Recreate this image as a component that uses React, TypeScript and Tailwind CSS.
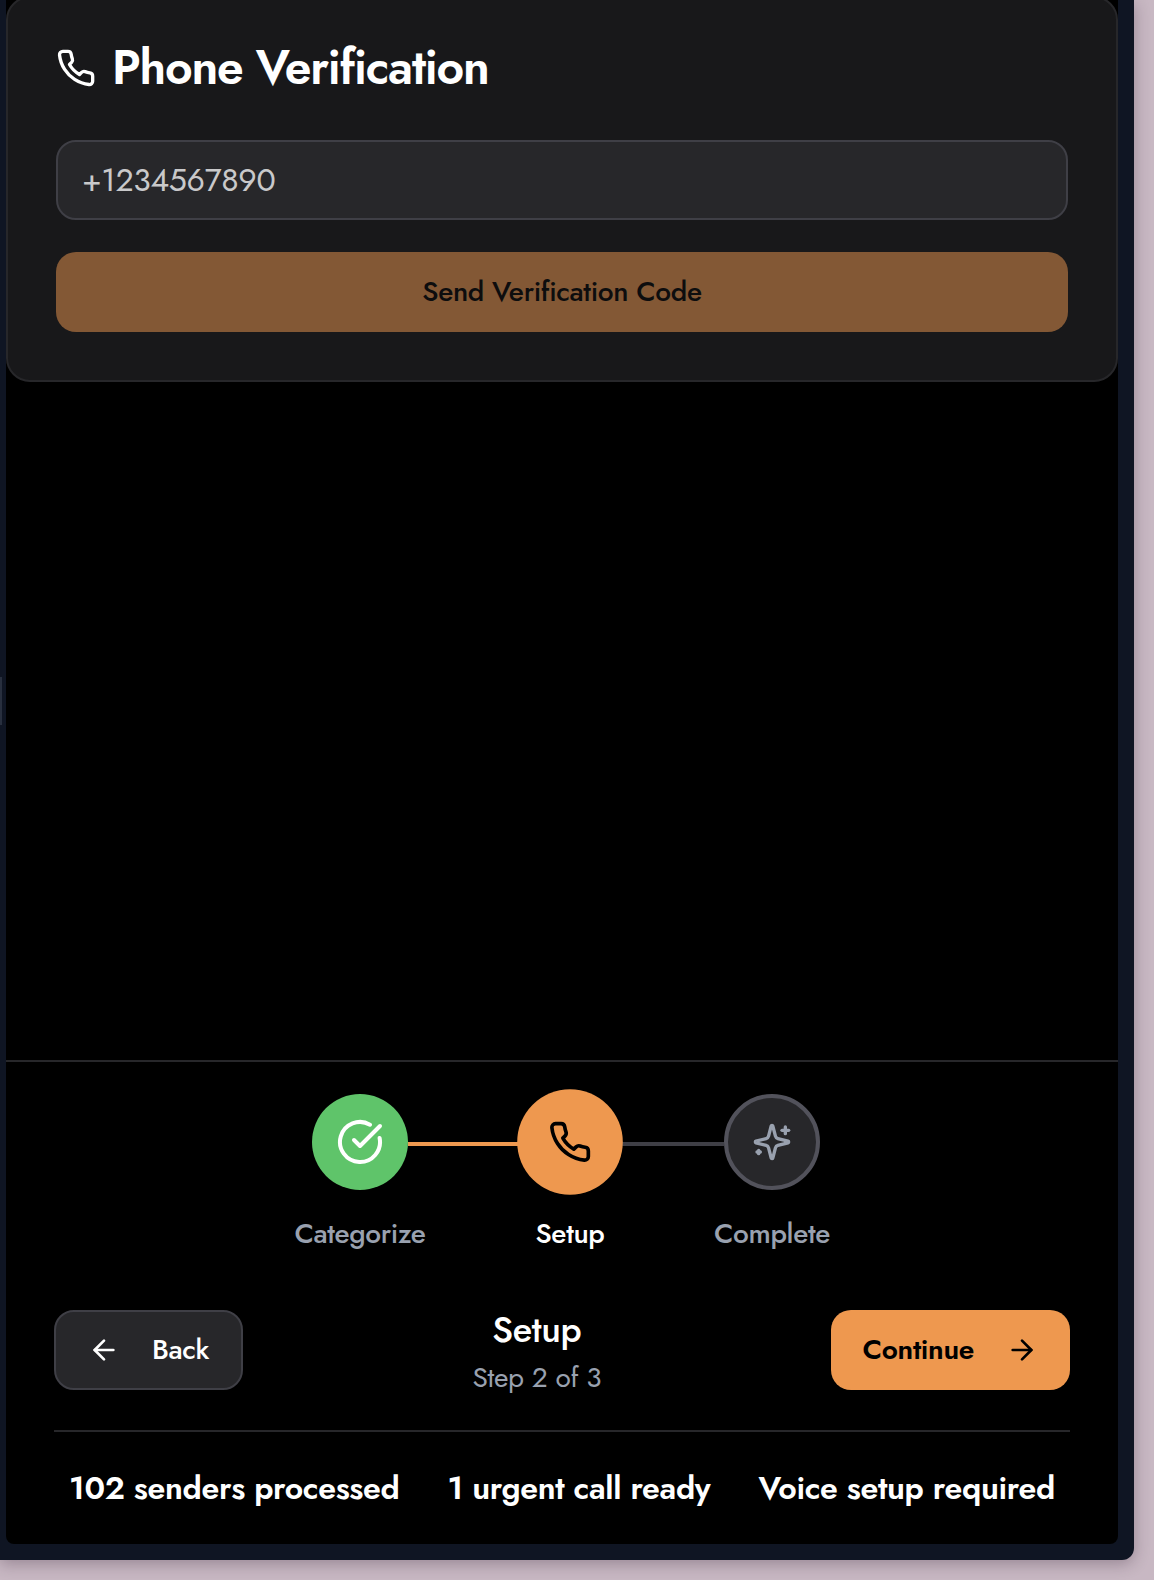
import type { ReactNode } from "react";

type IconProps = { className?: string; strokeWidth?: number; children?: ReactNode };

function Icon({ className, strokeWidth = 2, children }: IconProps) {
  return (
    <svg
      viewBox="0 0 24 24"
      fill="none"
      stroke="currentColor"
      strokeWidth={strokeWidth}
      strokeLinecap="round"
      strokeLinejoin="round"
      className={className}
    >
      {children}
    </svg>
  );
}

const PhoneIcon = ({ className }: IconProps) => (
  <Icon className={className}>
    <path d="M22 16.92v3a2 2 0 0 1-2.18 2 19.79 19.79 0 0 1-8.63-3.07 19.5 19.5 0 0 1-6-6 19.79 19.79 0 0 1-3.07-8.67A2 2 0 0 1 4.11 2h3a2 2 0 0 1 2 1.72 12.84 12.84 0 0 0 .7 2.81 2 2 0 0 1-.45 2.11L8.09 9.91a16 16 0 0 0 6 6l1.27-1.27a2 2 0 0 1 2.11-.45 12.84 12.84 0 0 0 2.81.7A2 2 0 0 1 22 16.92z" />
  </Icon>
);

const CheckIcon = ({ className }: IconProps) => (
  <Icon className={className}>
    <path d="M21.801 10A10 10 0 1 1 17 3.335" />
    <path d="m9 11 3 3L22 4" />
  </Icon>
);

const SparklesIcon = ({ className }: IconProps) => (
  <Icon className={className}>
    <path d="M9.937 15.5A2 2 0 0 0 8.5 14.063l-6.135-1.582a.5.5 0 0 1 0-.962L8.5 9.936A2 2 0 0 0 9.937 8.5l1.582-6.135a.5.5 0 0 1 .963 0L14.063 8.5A2 2 0 0 0 15.5 9.937l6.135 1.581a.5.5 0 0 1 0 .964L15.5 14.063a2 2 0 0 0-1.437 1.437l-1.582 6.135a.5.5 0 0 1-.963 0z" />
    <path d="M20 3v4" />
    <path d="M22 5h-4" />
    <path d="M4 17v2" />
    <path d="M5 18H3" />
  </Icon>
);

const ArrowLeft = ({ className }: IconProps) => (
  <Icon className={className}>
    <path d="m12 19-7-7 7-7" />
    <path d="M19 12H5" />
  </Icon>
);

const ArrowRight = ({ className }: IconProps) => (
  <Icon className={className}>
    <path d="M5 12h14" />
    <path d="m12 5 7 7-7 7" />
  </Icon>
);

function VerificationCard() {
  return (
    <section className="-mt-1 h-[386px] rounded-3xl border-2 border-[#27272a] bg-[#18181a] px-12 pt-[38px]">
      <div className="flex h-16 items-center gap-4">
        <PhoneIcon className="size-10" />
        <h1 className="text-[48px] leading-[64px] font-semibold tracking-tight whitespace-nowrap">Phone Verification</h1>
      </div>
      <div className="mt-10 flex h-20 items-center rounded-[20px] border-2 border-[#3f3f46] bg-[#27272a] px-6">
        <span className="text-[32px] text-[#c9c9ca]">+1234567890</span>
      </div>
      <button className="mt-8 flex h-20 w-full items-center justify-center rounded-[20px] bg-[#835835] text-[28px] font-medium text-[#0d0d0e]">
        Send Verification Code
      </button>
    </section>
  );
}

function Step({ label, labelClass, circleClass, children }: { label: string; labelClass: string; circleClass: string; children: ReactNode }) {
  return (
    <div className="z-10 flex w-24 flex-col items-center gap-6">
      <div className={`flex size-24 items-center justify-center rounded-full ${circleClass}`}>{children}</div>
      <span className={`text-[28px] leading-[39px] font-medium whitespace-nowrap ${labelClass}`}>{label}</span>
    </div>
  );
}

function Stepper() {
  return (
    <div className="flex h-40 justify-center pl-2">
      <Step label="Categorize" labelClass="text-[#99a1af]" circleClass="bg-[#5fc46a] text-white">
        <CheckIcon className="size-12" />
      </Step>
      <div className="mt-12 h-1 w-[114px] bg-[#ee984f]" />
      <Step label="Setup" labelClass="text-white" circleClass="scale-110 bg-[#ee984f] text-black">
        <PhoneIcon className="size-10" />
      </Step>
      <div className="mt-12 h-1 w-[106px] bg-[#3f3f46]" />
      <Step label="Complete" labelClass="text-[#99a1af]" circleClass="border-4 border-[#52525b] bg-[#27272a] text-[#99a1af]">
        <SparklesIcon className="size-10" />
      </Step>
    </div>
  );
}

export default function App() {
  return (
    <div className="relative h-[1580px] w-[1154px] overflow-hidden bg-[#c8b8c3] font-[Jost,Lato,sans-serif] tracking-[-0.32px] text-white">
      <div className="h-[1560px] w-[1134px] rounded-br-[12px] bg-[#0f1523] pr-4 pb-4 pl-1.5 shadow-[0_4px_16px_rgba(40,20,40,0.3)]">
        <main className="flex h-[1544px] flex-col justify-between overflow-hidden rounded-b-lg bg-black">
          <VerificationCard />
          <footer className="border-t-2 border-[#27272a] px-12 py-8">
            <Stepper />
            <div className="mt-12 flex items-center justify-between">
              <button className="flex h-20 items-center gap-8 rounded-[20px] border-2 border-[#3f3f46] bg-[#27272a] px-8 text-[28px] font-medium">
                <ArrowLeft className="size-8" />
                Back
              </button>
              <div className="text-center">
                <div className="mb-0.5 text-[36px] leading-[54px] font-medium">Setup</div>
                <div className="text-[28px] leading-10 text-[#99a1af]">Step 2 of 3</div>
              </div>
              <button className="flex h-20 items-center gap-8 rounded-[20px] bg-[#ee984f] px-8 text-[28px] font-semibold text-black">
                Continue
                <ArrowRight className="size-8" />
              </button>
            </div>
            <div className="mt-8 flex justify-center gap-12 border-t-2 border-[#27272a] pt-8 text-[32px] leading-[48px] font-semibold whitespace-nowrap">
              <span>102 senders processed</span>
              <span>1 urgent call ready</span>
              <span>Voice setup required</span>
            </div>
          </footer>
        </main>
      </div>
      <div className="absolute top-[677px] left-0 h-12 w-0.5 bg-[#282f3e]" />
    </div>
  );
}
